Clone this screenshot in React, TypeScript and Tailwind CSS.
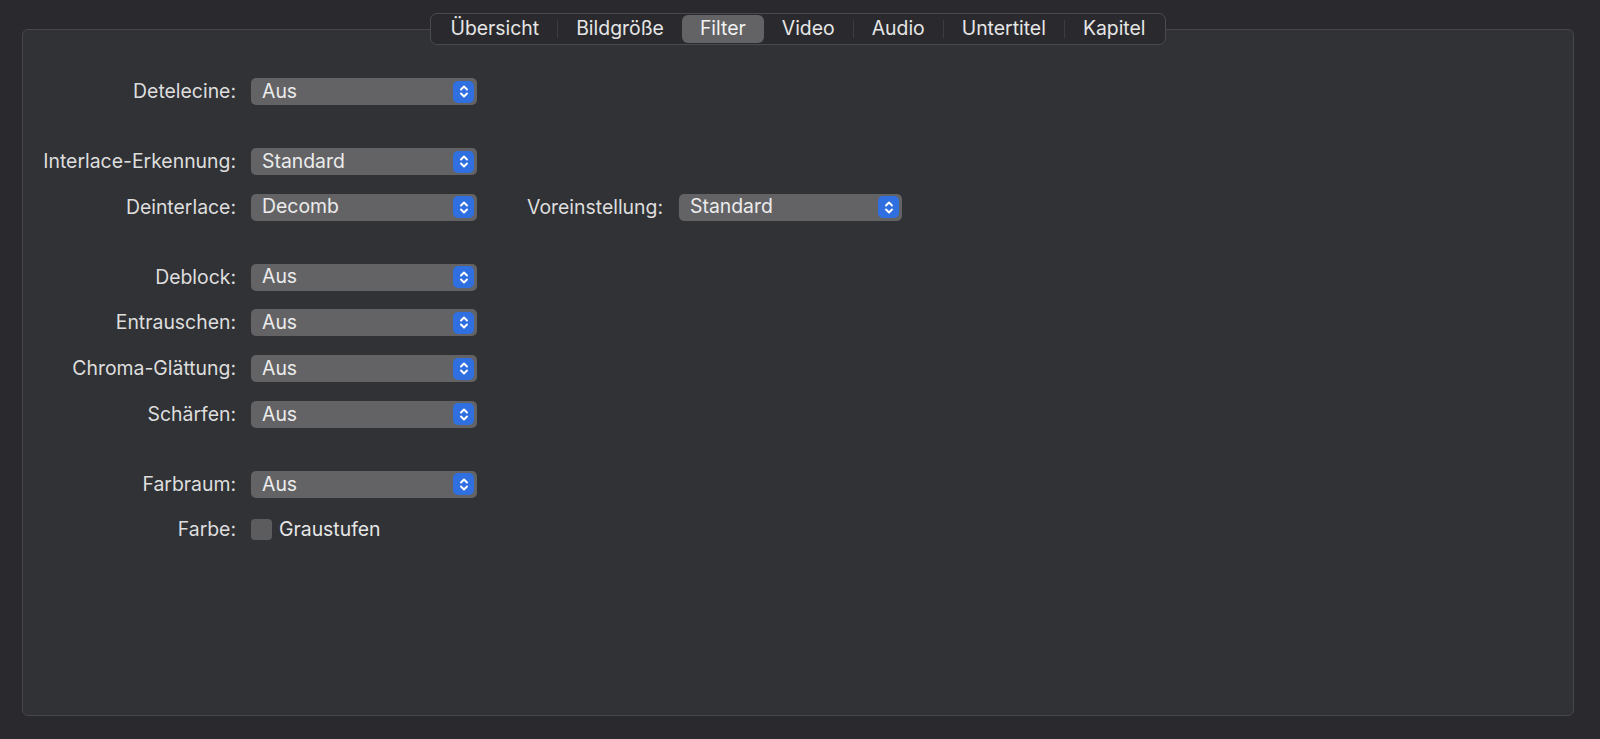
import React from "react";

const tabs = ["Übersicht", "Bildgröße", "Filter", "Video", "Audio", "Untertitel", "Kapitel"];

const Chevrons = () => (
  <span className="flex h-[22px] w-[21px] items-center justify-center rounded-[5px] bg-[#2f6fdf]">
    <svg width="10" height="15" viewBox="0 0 10 15" fill="none" stroke="#ffffff" strokeWidth="1.9" strokeLinecap="round" strokeLinejoin="round">
      <path d="M2 5.5 L5 2.5 L8 5.5" />
      <path d="M2 9.5 L5 12.5 L8 9.5" />
    </svg>
  </span>
);

const Popup = ({ value, width = "w-[226px]" }: { value: string; width?: string }) => (
  <div className={`flex h-[27px] ${width} items-center justify-between rounded-[5px] bg-[#636366] pl-[11px] pr-[3px] text-[19.4px] text-[#ececec]`}>
    <span className="leading-none">{value}</span>
    <Chevrons />
  </div>
);

const Row = ({ label, children, top = false }: { label: string; children: React.ReactNode; top?: boolean }) => (
  <div className={`flex h-[27px] items-center ${top ? "mt-[43px]" : "mt-[18.7px]"}`}>
    <div className="w-[213px] text-right text-[19.4px] text-[#dedede]">{label}</div>
    <div className="ml-[15px] flex items-center">{children}</div>
  </div>
);

export default function App() {
  return (
    <div
      className="h-[739px] w-[1600px] overflow-hidden bg-[#2a2a2e] pt-[13px]"
      style={{ fontFamily: "Inter, 'Noto Sans', sans-serif" }}
    >
      <div className="ml-[22px] w-[1552px]">
        {/* Tab bar */}
        <div className="relative z-10 flex justify-center">
          <div className="flex h-[32px] items-center rounded-[7px] border border-[#4a4b4f] bg-[#2a2a2e] px-[1px]">
            {tabs.map((t, i) => {
              const sel = t === "Filter";
              const nextSel = tabs[i + 1] === "Filter";
              return (
                <React.Fragment key={t}>
                  <div
                    className={`flex h-[28px] items-center rounded-[6px] px-[18px] text-[19.4px] ${
                      sel ? "bg-[#636366] text-[#f2f2f2]" : "text-[#e6e6e6]"
                    }`}
                  >
                    {t}
                  </div>
                  {i < tabs.length - 1 && !sel && !nextSel && (
                    <div className="h-[18px] w-px bg-[#3b3c40]" />
                  )}
                </React.Fragment>
              );
            })}
          </div>
        </div>

        {/* Panel */}
        <div className="-mt-[16px] h-[687px] rounded-[6px] border border-[#46474b] bg-[#313236] pt-[48px]">
          <div className="-mt-[18.7px]">
            <Row label="Detelecine:">
              <Popup value="Aus" />
            </Row>

            <Row label="Interlace-Erkennung:" top>
              <Popup value="Standard" />
            </Row>
            <Row label="Deinterlace:">
              <Popup value="Decomb" />
              <span className="w-[186px] text-right text-[19.4px] text-[#dedede]">Voreinstellung:</span>
              <div className="ml-[16px]">
                <Popup value="Standard" width="w-[223px]" />
              </div>
            </Row>

            <Row label="Deblock:" top>
              <Popup value="Aus" />
            </Row>
            <Row label="Entrauschen:">
              <Popup value="Aus" />
            </Row>
            <Row label="Chroma-Glättung:">
              <Popup value="Aus" />
            </Row>
            <Row label="Schärfen:">
              <Popup value="Aus" />
            </Row>

            <Row label="Farbraum:" top>
              <Popup value="Aus" />
            </Row>
            <Row label="Farbe:">
              <span className="h-[21px] w-[21px] rounded-[4px] bg-[#5c5c5f]" />
              <span className="ml-[7px] text-[19.4px] text-[#e6e6e6]">Graustufen</span>
            </Row>
          </div>
        </div>
      </div>
    </div>
  );
}
